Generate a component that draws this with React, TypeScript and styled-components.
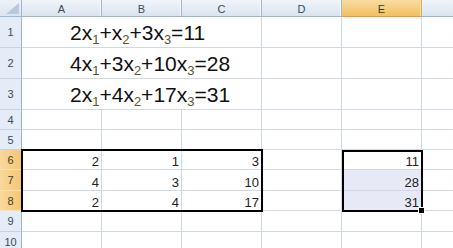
import React from "react";
import styled, { createGlobalStyle } from "styled-components";

const GlobalStyle = createGlobalStyle`
  html, body {
    margin: 0;
    padding: 0;
    background: #ffffff;
    overflow: hidden;
  }
  body {
    font-family: "Liberation Sans", Arial, sans-serif;
  }
`;

const COLS = ["A", "B", "C", "D", "E", "F"];
const ROW_HEIGHTS = [31, 31, 31, 20, 20, 20, 21, 20, 21, 20];

// a1 x1 + a2 x2 + a3 x3 = b
const equations = [
  [2, 1, 3, 11],
  [4, 3, 10, 28],
  [2, 4, 17, 31],
];

const values: Record<string, number> = {
  A6: 2, B6: 1, C6: 3, E6: 11,
  A7: 4, B7: 3, C7: 10, E7: 28,
  A8: 2, B8: 4, C8: 17, E8: 31,
};

const selectedCol = "E";
const selectedRows = [6, 7, 8];

const Sheet = styled.div`
  display: grid;
  grid-template-columns: 22px repeat(6, 80px);
  grid-template-rows: 17px ${ROW_HEIGHTS.map((h) => `${h}px`).join(" ")};
  width: 453px;
  height: 248px;
  overflow: hidden;
  background: #ffffff;
`;

const Placed = styled.div<{ $row: number; $col: number; $span?: number; $rowSpan?: number }>`
  grid-row: ${(p) => p.$row} / span ${(p) => p.$rowSpan ?? 1};
  grid-column: ${(p) => p.$col} / span ${(p) => p.$span ?? 1};
  box-sizing: border-box;
  min-width: 0;
`;

const Corner = styled(Placed)`
  position: relative;
  background: linear-gradient(to bottom, #eef2f8, #dce4ef);
  border-right: 1px solid #9eb6ce;
  border-bottom: 1px solid #9eb6ce;

  svg {
    position: absolute;
    right: 2px;
    bottom: 2px;
  }
`;

const ColHeader = styled(Placed)<{ $selected?: boolean }>`
  display: flex;
  align-items: center;
  justify-content: center;
  padding-top: 1px;
  font-size: 11px;
  color: ${(p) => (p.$selected ? "#3d3a30" : "#3b4a5d")};
  background: ${(p) =>
    p.$selected
      ? "linear-gradient(to bottom, #f9dba3, #f1c15f)"
      : "linear-gradient(to bottom, #f1f5fa, #dae3ef)"};
  border-right: 1px solid ${(p) => (p.$selected ? "#e9a94a" : "#9eb6ce")};
  border-bottom: 1px solid ${(p) => (p.$selected ? "#f29536" : "#9eb6ce")};
  box-shadow: inset -1px 0 0 ${(p) => (p.$selected ? "#fbe2b0" : "#f6f8fb")};
`;

const RowHeader = styled(Placed)<{ $selected?: boolean }>`
  display: flex;
  align-items: center;
  justify-content: center;
  font-size: 11px;
  color: ${(p) => (p.$selected ? "#3d3a30" : "#3b4a5d")};
  background: ${(p) =>
    p.$selected ? "linear-gradient(to right, #f9d89c, #f5c774)" : "#e4ecf7"};
  border-right: 1px solid ${(p) => (p.$selected ? "#e9a94a" : "#9eb6ce")};
  border-bottom: 1px solid ${(p) => (p.$selected ? "#fbe0ae" : "#c5d3e6")};
`;

const Cell = styled(Placed)<{ $fill?: boolean }>`
  display: flex;
  align-items: flex-end;
  justify-content: flex-end;
  padding-right: 2px;
  font-size: 13px;
  line-height: 14px;
  color: #222222;
  background: ${(p) => (p.$fill ? "#e7eaf6" : "transparent")};
  border-right: 1px solid #d0d7e5;
  border-bottom: 1px solid #d0d7e5;
`;

const EquationCell = styled(Placed)`
  padding: 5px 0 0 48px;
  font-size: 21px;
  line-height: 22px;
  color: #111111;
  white-space: nowrap;
  border-right: 1px solid #d0d7e5;
  border-bottom: 1px solid #d0d7e5;
`;

const Sub = styled.span`
  font-size: 13px;
  vertical-align: -4px;
  line-height: 0;
  color: #5c5628;
`;

const ThickBox = styled(Placed)`
  margin: -1px;
  border: 2px solid #000000;
  pointer-events: none;
  z-index: 2;
`;

const Selection = styled(Placed)`
  position: relative;
  margin: 0 -1px -1px 0;
  border: 2px solid #000000;
  pointer-events: none;
  z-index: 3;
`;

const FillHandle = styled.div`
  position: absolute;
  right: -4px;
  bottom: -4px;
  width: 5px;
  height: 5px;
  background: #000000;
  border: 1px solid #ffffff;
`;

const Equation: React.FC<{ coefs: number[] }> = ({ coefs }) => {
  const rhs = coefs[3];
  return (
    <span>
      {coefs.slice(0, 3).map((c, i) => (
        <React.Fragment key={i}>
          {i > 0 && "+"}
          {c === 1 ? "" : c}x<Sub>{i + 1}</Sub>
        </React.Fragment>
      ))}
      ={rhs}
    </span>
  );
};

const App: React.FC = () => {
  const rows = ROW_HEIGHTS.map((_, i) => i + 1);

  return (
    <>
      <GlobalStyle />
      <Sheet>
        <Corner $row={1} $col={1}>
          <svg width="13" height="11" viewBox="0 0 13 11">
            <polygon points="13,0 13,11 0,11" fill="#b9c9dd" />
          </svg>
        </Corner>
        {COLS.map((c, i) => (
          <ColHeader key={c} $row={1} $col={i + 2} $selected={c === selectedCol}>
            {/* column F is cut by the window edge before its letter shows */}
            {c !== "F" && c}
          </ColHeader>
        ))}

        {rows.map((r) => (
          <React.Fragment key={r}>
            <RowHeader $row={r + 1} $col={1} $selected={selectedRows.includes(r)}>
              {r}
            </RowHeader>
            {r <= 3 ? (
              <>
                <EquationCell $row={r + 1} $col={2} $span={3}>
                  <Equation coefs={equations[r - 1]} />
                </EquationCell>
                {COLS.slice(3).map((c, i) => (
                  <Cell key={c} $row={r + 1} $col={i + 5} />
                ))}
              </>
            ) : (
              COLS.map((c, i) => {
                const id = `${c}${r}`;
                const fill = c === selectedCol && selectedRows.slice(1).includes(r);
                return (
                  <Cell key={c} $row={r + 1} $col={i + 2} $fill={fill}>
                    {values[id]}
                  </Cell>
                );
              })
            )}
          </React.Fragment>
        ))}

        <ThickBox $row={7} $col={2} $span={3} $rowSpan={3} />
        <Selection $row={7} $col={6} $rowSpan={3}>
          <FillHandle />
        </Selection>
      </Sheet>
    </>
  );
};

export default App;
